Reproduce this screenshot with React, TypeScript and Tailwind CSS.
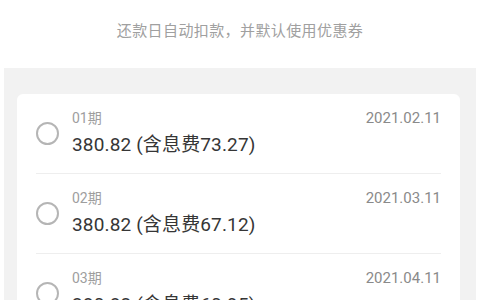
const font = {
  fontFamily: 'Roboto, "Noto Sans CJK SC", sans-serif',
};

const periods = [
  { label: "01期", amount: "380.82", fee: "73.27", date: "2021.02.11" },
  { label: "02期", amount: "380.82", fee: "67.12", date: "2021.03.11" },
  { label: "03期", amount: "380.82", fee: "60.95", date: "2021.04.11" },
];

const App = () => {
  return (
    <div
      className="flex h-[300px] w-[480px] flex-col overflow-hidden bg-white"
      style={font}
    >
      <div className="flex h-[68px] shrink-0 items-center justify-center pb-[6px]">
        <p className="text-[15px] leading-5 tracking-[0.4px] text-[#a0a0a0]">
          还款日自动扣款，并默认使用优惠券
        </p>
      </div>

      <div className="mx-[4px] flex-1 bg-[#f2f2f2] pl-[13px] pr-[16px] pt-[26px]">
        <div className="rounded-[6px] bg-white px-[19px]">
          {periods.map((p) => (
            <div
              key={p.label}
              className="flex items-center border-b border-[#eeeeee] pb-[15px] pt-[14px]"
            >
              <span className="h-[23px] w-[23px] shrink-0 rounded-full border-2 border-[#b5b5b5]" />
              <div className="ml-[13px] flex flex-1 flex-col">
                <div className="flex items-center justify-between">
                  <span className="text-[14px] leading-5 text-[#9e9e9e]">
                    {p.label}
                  </span>
                  <span className="text-[15px] leading-5 text-[#8a8a8a]">
                    {p.date}
                  </span>
                </div>
                <span className="mt-[4px] text-[19px] leading-[26px] tracking-[0.15px] text-[#363636]">
                  {p.amount} (含息费{p.fee})
                </span>
              </div>
            </div>
          ))}
        </div>
      </div>
    </div>
  );
};

export default App;
